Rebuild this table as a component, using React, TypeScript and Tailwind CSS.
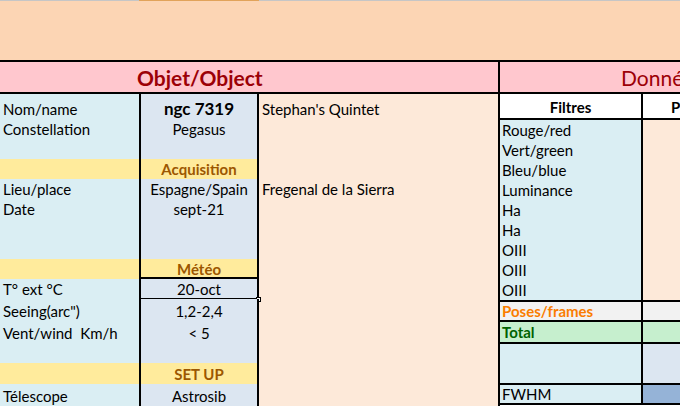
import React from "react";

type LeftRow = {
  a?: string;
  b?: string;
  c?: string;
  h: string;
  section?: boolean;
  big?: boolean;
  selected?: boolean;
};

const leftRows: LeftRow[] = [
  { a: "Nom/name", b: "ngc 7319", c: "Stephan's Quintet", h: "h-[25px]", big: true },
  { a: "Constellation", b: "Pegasus", h: "h-[20px]" },
  { h: "h-[20px]" },
  { b: "Acquisition", h: "h-[20px]", section: true },
  { a: "Lieu/place", b: "Espagne/Spain", c: "Fregenal de la Sierra", h: "h-[20px]" },
  { a: "Date", b: "sept-21", h: "h-[20px]" },
  { h: "h-[20px]" },
  { h: "h-[20px]" },
  { b: "Météo", h: "h-[20px]", section: true },
  { a: "T° ext °C", b: "20-oct", h: "h-[20px]", selected: true },
  { a: 'Seeing(arc")', b: "1,2-2,4", h: "h-[22px]" },
  { a: "Vent/wind  Km/h", b: "< 5", h: "h-[22px]" },
  { h: "h-[20px]" },
  { b: "SET UP", h: "h-[21px]", section: true },
  { a: "Télescope", b: "Astrosib", h: "h-[22px]" },
];

const filters = ["Rouge/red", "Vert/green", "Bleu/blue", "Luminance", "Ha", "Ha", "OIII", "OIII", "OIII"];

function LeftTable() {
  return (
    <div className="w-[498px] shrink-0 flex flex-col">
      {leftRows.map((r, i) => (
        <div key={i} className={`flex ${r.h}`}>
          <div
            className={`w-[139px] pl-[3px] pb-[2px] flex items-end whitespace-pre ${
              r.section ? "bg-[#ffeb9c]" : "bg-[#daeef3]"
            }`}
          >
            {r.a}
          </div>
          <div
            className={`relative w-[120px] pb-[2px] border-x-2 border-black flex items-end justify-center ${
              r.section ? "bg-[#ffeb9c] text-[#9c5700] font-bold" : "bg-[#dce6f1]"
            } ${r.big ? "font-bold text-[17px]" : ""}`}
          >
            {r.b}
            {r.selected && (
              <div className="absolute -left-[2px] -right-[2px] -top-[2px] -bottom-[1px] border-2 border-black">
                <div className="absolute -right-[4px] -bottom-[4px] w-[5px] h-[5px] bg-white border border-black" />
              </div>
            )}
          </div>
          <div className="flex-1 bg-[#fde9d9] pl-[3px] pb-[2px] flex items-end">{r.c}</div>
        </div>
      ))}
    </div>
  );
}

function RightTable() {
  return (
    <div className="flex-1 min-w-0 flex flex-col border-l-2 border-black">
      <div className="flex h-[26px] border-b-2 border-black bg-white font-bold">
        <div className="w-[143px] shrink-0 border-r-2 border-black pb-[3px] flex items-end justify-center">
          Filtres
        </div>
        <div className="flex-1 min-w-0 pl-[28px] pb-[3px] flex items-end overflow-hidden whitespace-nowrap">
          Poses
        </div>
      </div>
      <div className="flex border-b-2 border-black">
        <div className="w-[143px] shrink-0 border-r-2 border-black bg-[#daeef3] flex flex-col">
          {filters.map((f, i) => (
            <div key={i} className="h-[20px] pl-[2px] flex items-center">
              {f}
            </div>
          ))}
        </div>
        <div className="flex-1 bg-[#fde9d9]" />
      </div>
      <div className="flex h-[20px] border-b-2 border-black bg-[#f2f2f2]">
        <div className="w-[143px] shrink-0 border-r-2 border-black pl-[2px] flex items-center font-bold text-[#fa7d00]">
          Poses/frames
        </div>
        <div className="flex-1" />
      </div>
      <div className="flex h-[22px] border-b-2 border-black bg-[#c6efce]">
        <div className="w-[143px] shrink-0 border-r-2 border-black pl-[2px] pb-[2px] flex items-end font-bold text-[#006100]">
          Total
        </div>
        <div className="flex-1" />
      </div>
      <div className="flex h-[41px] border-b-2 border-black">
        <div className="w-[143px] shrink-0 border-r-2 border-black bg-[#daeef3]" />
        <div className="flex-1 bg-[#dce6f1]" />
      </div>
      <div className="flex h-[20px] border-b-2 border-black">
        <div className="w-[143px] shrink-0 border-r-2 border-black bg-[#daeef3] pl-[2px] pb-[1px] flex items-end">
          FWHM
        </div>
        <div className="flex-1 bg-[#95b3d7]" />
      </div>
    </div>
  );
}

export default function App() {
  return (
    <div
      className="w-[680px] h-[406px] overflow-hidden bg-white text-[15px] text-black leading-none"
      style={{ fontFamily: "Lato, 'Open Sans', sans-serif" }}
    >
      <div className="flex h-px">
        <div className="w-[139px] bg-[#c6c6c6]" />
        <div className="w-[120px] bg-[#e1a35a]" />
        <div className="flex-1 bg-[#c6c6c6]" />
      </div>
      <div className="h-[59px] bg-[#fcd5b4]" />
      <div className="flex h-[34px] border-y-2 border-black bg-[#ffc7ce] text-[#9c0006] text-[21px]">
        <div className="w-[498px] shrink-0 pl-[137px] flex items-center font-bold">Objet/Object</div>
        <div className="flex-1 min-w-0 border-l-2 border-black pl-[121px] flex items-center whitespace-nowrap overflow-hidden">
          Données
        </div>
      </div>
      <div className="flex">
        <LeftTable />
        <RightTable />
      </div>
    </div>
  );
}
